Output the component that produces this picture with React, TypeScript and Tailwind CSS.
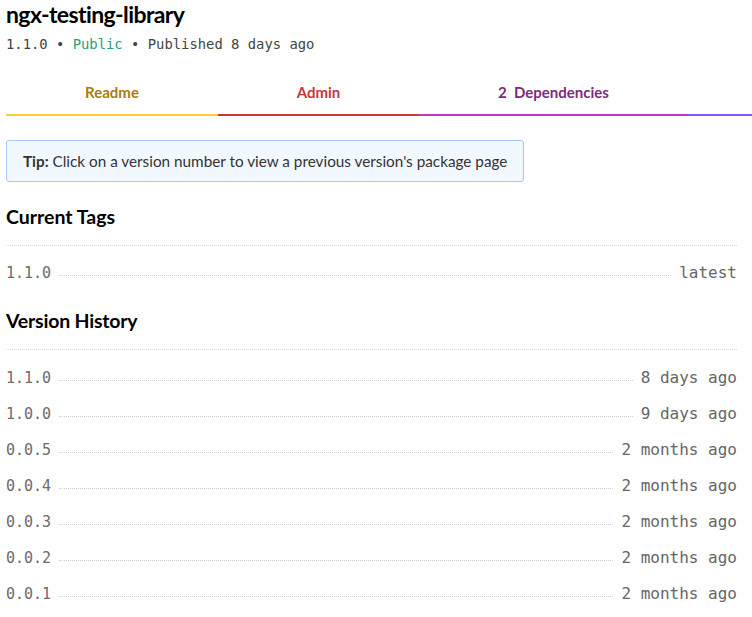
import React from 'react';

const sans = { fontFamily: '"Lato", "Open Sans", sans-serif' };
const mono = { fontFamily: '"DejaVu Sans Mono", "Liberation Mono", monospace' };

const tabs = [
  { label: 'Readme', width: 'w-[212px]', text: 'text-[#a77d0c]', line: 'border-[#ffcd3a]' },
  { label: 'Admin', width: 'w-[201px]', text: 'text-[#c73636]', line: 'border-[#cb3837]' },
  { label: '2  Dependencies', width: 'w-[269px]', text: 'text-[#7e2a7e]', line: 'border-[#c836c3]' },
  { label: '', width: 'flex-1', text: 'text-[#8956ff]', line: 'border-[#8956ff]' },
];

const versions = [
  { v: '1.1.0', ago: '8 days ago' },
  { v: '1.0.0', ago: '9 days ago' },
  { v: '0.0.5', ago: '2 months ago' },
  { v: '0.0.4', ago: '2 months ago' },
  { v: '0.0.3', ago: '2 months ago' },
  { v: '0.0.2', ago: '2 months ago' },
  { v: '0.0.1', ago: '2 months ago' },
];

function Row({ left, right }: { left: string; right: string }) {
  return (
    <li className="flex items-center py-[6px] leading-[24px]">
      <span className="text-[15px] text-[#6b6b6b]" style={mono}>{left}</span>
      <span className="flex-1 mx-2 mt-[5px] border-b border-dotted border-[#cfcfcf]" />
      <span className="text-[16px] text-[#666]" style={mono}>{right}</span>
    </li>
  );
}

export default function App() {
  return (
    <div className="bg-white min-h-[617px] pl-[6px] text-[#222] overflow-hidden" style={sans}>
      <h2 className="text-[23px] leading-[28px] font-bold text-black tracking-[-0.6px]">ngx-testing-library</h2>
      <div className="mt-[6px] text-[13.85px] leading-[20px] text-[#444]" style={mono}>
        1.1.0 • <span className="text-[#25a17e]">Public</span> • Published 8 days ago
      </div>

      <div className="flex mt-[10px] -mr-[10px]">
        {tabs.map((t, i) => (
          <div
            key={i}
            className={`${t.width} ${t.text} ${t.line} border-b-2 pt-[18px] pb-[12px] text-center text-[15px] leading-[20px] font-bold whitespace-pre`}
          >
            {t.label}
          </div>
        ))}
      </div>

      <div className="mt-[24px] inline-block border border-[#a9c5fb] bg-[#f2f8ff] rounded-[3px] px-4 py-2 text-[15.3px] leading-[24px] text-[#333]">
        <b>Tip:</b> Click on a version number to view a previous version's package page
      </div>

      <div className="pr-[15px]">
        <h3 className="mt-[21px] text-[19.5px] leading-[28px] font-bold text-black pb-[14px] border-b border-dotted border-[#d6d6d6]">
          Current Tags
        </h3>
        <ul className="pt-[9px]">
          <Row left="1.1.0" right="latest" />
        </ul>

        <h3 className="mt-[16px] text-[19.5px] leading-[28px] font-bold text-black pb-[14px] border-b border-dotted border-[#d6d6d6] tracking-[-0.2px]">
          Version History
        </h3>
        <ul className="pt-[10px]">
          {versions.map((r) => (
            <Row key={r.v} left={r.v} right={r.ago} />
          ))}
        </ul>
      </div>
    </div>
  );
}
